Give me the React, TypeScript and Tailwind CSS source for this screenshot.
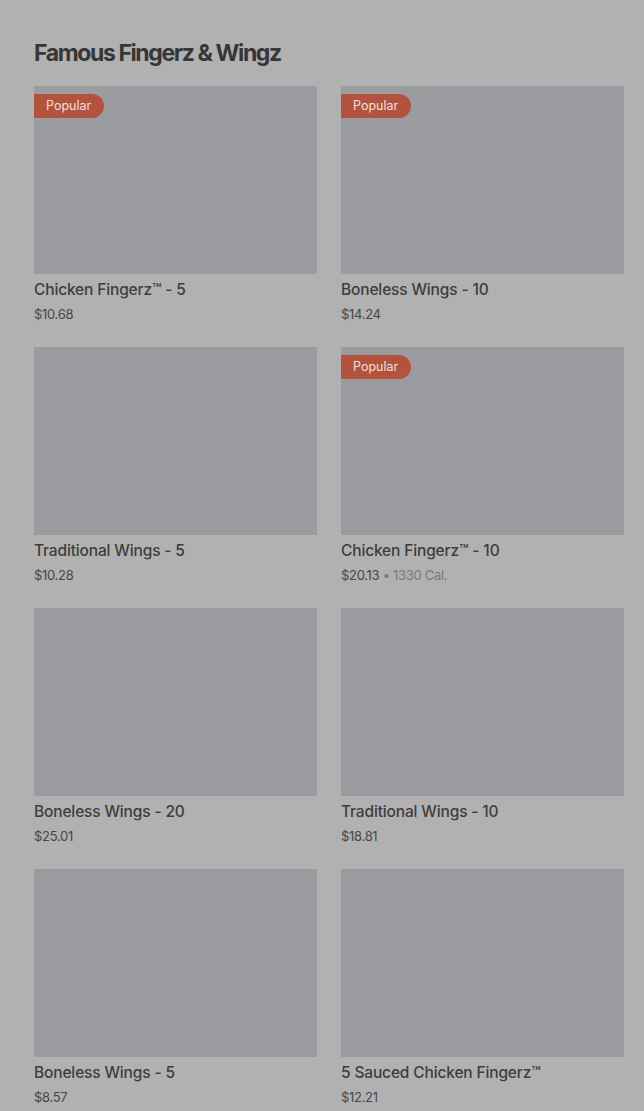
import React from "react";

type Item = { name: string; price: string; cal?: string; popular?: boolean };

const items: Item[] = [
  { name: "Chicken Fingerz™ - 5", price: "$10.68", popular: true },
  { name: "Boneless Wings - 10", price: "$14.24", popular: true },
  { name: "Traditional Wings - 5", price: "$10.28" },
  { name: "Chicken Fingerz™ - 10", price: "$20.13", cal: "1330 Cal.", popular: true },
  { name: "Boneless Wings - 20", price: "$25.01" },
  { name: "Traditional Wings - 10", price: "$18.81" },
  { name: "Boneless Wings - 5", price: "$8.57" },
  { name: "5 Sauced Chicken Fingerz™", price: "$12.21" },
];

export default function App() {
  return (
    <div
      className="min-h-[1111px] bg-[#b1b1b1] pl-[34px] pr-[20px] pt-[37px]"
      style={{ fontFamily: "Inter, 'Noto Sans', sans-serif" }}
    >
      <h2 className="text-[23px] leading-[32px] font-bold tracking-[-1.4px] text-[#363636]">
        Famous Fingerz &amp; Wingz
      </h2>
      <div className="mt-[17px] grid grid-cols-2 gap-x-[24px] gap-y-[23px]">
        {items.map((it) => (
          <div key={it.name} className="flex flex-col">
            <div className="relative h-[188px] bg-[#9b9ca0]">
              {it.popular && (
                <span className="absolute left-0 top-[8px] flex h-[24px] w-[70px] items-center rounded-r-full bg-[#b3533d] pl-[12px] text-[12.5px] font-normal text-[#ece0dc]">
                  Popular
                </span>
              )}
            </div>
            <div className="mt-[5px] text-[15.5px] leading-[22px] font-medium tracking-[-0.15px] text-[#3d3d3d]">
              {it.name}
            </div>
            <div className="mt-[3px] text-[13px] leading-[20px] text-[#474747] tracking-[-0.3px]">
              {it.price}
              {it.cal && (
                <span className="text-[#7a7a7a]"> • {it.cal}</span>
              )}
            </div>
          </div>
        ))}
      </div>
    </div>
  );
}
